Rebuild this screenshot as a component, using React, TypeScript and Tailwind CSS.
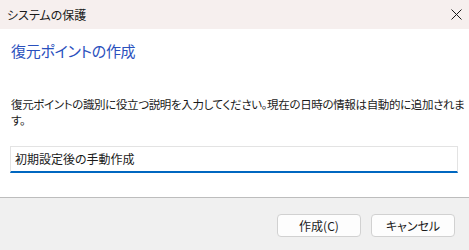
import React from "react";

export default function App() {
  const font = { fontFamily: '"Noto Sans CJK JP", "Noto Sans", sans-serif' };
  return (
    <div
      className="w-[469px] h-[250px] flex flex-col bg-white overflow-hidden text-[#1a1a1a] [font-feature-settings:'palt']"
      style={font}
    >
      <div className="h-[29px] bg-[#f6efee] flex items-center justify-between pl-[7px]">
        <span className="text-[12px] leading-none">システムの保護</span>
        <div className="w-[26px] h-[20px] flex items-center justify-center">
          <svg width="11" height="11" viewBox="0 0 11 11">
            <path d="M0.5 0.5 L10.5 10.5 M10.5 0.5 L0.5 10.5" stroke="#1a1a1a" strokeWidth="1" fill="none" />
          </svg>
        </div>
      </div>
      <div className="h-[168px] flex flex-col px-[11px] pt-[12px]">
        <div className="text-[15px] leading-[20px] text-[#2a50bd] tracking-[-0.3px]">復元ポイントの作成</div>
        <p className="mt-[35px] text-[11.5px] leading-[16px] tracking-[-0.35px] whitespace-nowrap">
          復元ポイントの識別に役立つ説明を入力してください。現在の日時の情報は自動的に追加されま
          <br />
          す。
        </p>
        <div className="mt-[18px] -ml-[1px] w-[448px] h-[27px] border border-[#e3e3e3] border-b-2 border-b-[#0067c0] flex items-center px-[4px]">
          <span className="text-[12px] leading-none">初期設定後の手動作成</span>
        </div>
      </div>
      <div className="border-t border-[#bdbdbd] bg-[#f0f0f0] flex-1 flex justify-end items-start gap-[10px] pt-[16px] pr-[14px]">
        <button className="w-[84px] h-[23px] rounded-[4px] border border-[#d1d1d1] bg-[#fdfdfd] text-[12px] leading-none">
          作成(C)
        </button>
        <button className="w-[84px] h-[23px] rounded-[4px] border border-[#d1d1d1] bg-[#fdfdfd] text-[12px] leading-none">
          キャンセル
        </button>
      </div>
    </div>
  );
}
